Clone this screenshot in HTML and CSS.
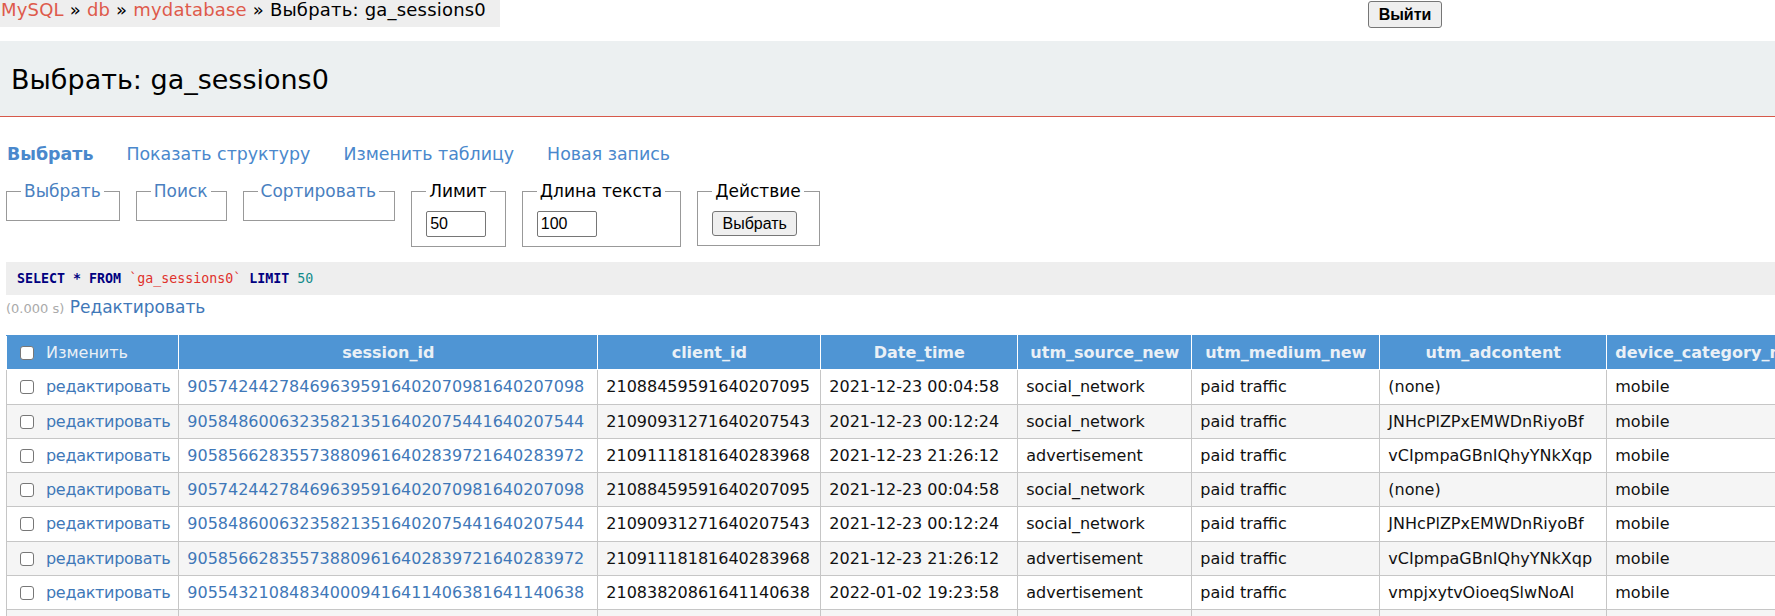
FILE: index.html
```html
<!DOCTYPE html>
<html lang="ru">
<head>
<meta charset="utf-8">
<title>Выбрать: ga_sessions0 - Adminer</title>
<link rel="stylesheet" href="styles.css">
</head>
<body>
<div class="topbar">
  <div class="crumbs"><a href="#">MySQL</a> » <a href="#">db</a> » <a href="#">mydatabase</a> » Выбрать: ga_sessions0</div>
  <button class="logout" type="button">Выйти</button>
</div>
<div class="head"><h1 class="title">Выбрать: ga_sessions0</h1></div>
<div class="main">
  <p class="links">
    <a href="#" class="cur">Выбрать</a>
    <a href="#">Показать структуру</a>
    <a href="#">Изменить таблицу</a>
    <a href="#">Новая запись</a>
  </p>
  <form class="filters">
    <fieldset class="fs"><legend><a href="#">Выбрать</a></legend></fieldset>
    <fieldset class="fs"><legend><a href="#">Поиск</a></legend></fieldset>
    <fieldset class="fs"><legend><a href="#">Сортировать</a></legend></fieldset>
    <fieldset class="fs"><legend>Лимит</legend><input class="num" type="text" value="50"></fieldset>
    <fieldset class="fs"><legend>Длина текста</legend><input class="num" type="text" value="100"></fieldset>
    <fieldset class="fs"><legend>Действие</legend><button class="btn" type="button">Выбрать</button></fieldset>
  </form>
  <pre class="sql"><span class="kw">SELECT</span> <span class="kw">*</span> <span class="kw">FROM</span> <span class="str">`ga_sessions0`</span> <span class="kw">LIMIT</span> <span class="numv">50</span></pre>
  <p class="timing"><span class="time">(0.000 s)</span> <a href="#">Редактировать</a></p>
  <div class="tablewrap">
    <table class="grid">
      <thead>
        <tr>
          <th class="first c-edit"><input class="cb" type="checkbox">Изменить</th>
          <th class="c-session">session_id</th>
          <th class="c-client">client_id</th>
          <th class="c-date">Date_time</th>
          <th class="c-source">utm_source_new</th>
          <th class="c-medium">utm_medium_new</th>
          <th class="c-ad">utm_adcontent</th>
          <th>device_category_new</th>
          <th>device_os_new</th>
        </tr>
      </thead>
      <tbody>
        <tr><td><input class="cb" type="checkbox"><a class="edit" href="#">редактировать</a></td><td><a href="#">905742442784696395916402070981640207098</a></td><td>21088459591640207095</td><td>2021-12-23 00:04:58</td><td>social_network</td><td>paid traffic</td><td>(none)</td><td>mobile</td><td>Android</td></tr>
        <tr><td><input class="cb" type="checkbox"><a class="edit" href="#">редактировать</a></td><td><a href="#">905848600632358213516402075441640207544</a></td><td>21090931271640207543</td><td>2021-12-23 00:12:24</td><td>social_network</td><td>paid traffic</td><td>JNHcPlZPxEMWDnRiyoBf</td><td>mobile</td><td>Android</td></tr>
        <tr><td><input class="cb" type="checkbox"><a class="edit" href="#">редактировать</a></td><td><a href="#">905856628355738809616402839721640283972</a></td><td>21091118181640283968</td><td>2021-12-23 21:26:12</td><td>advertisement</td><td>paid traffic</td><td>vCIpmpaGBnIQhyYNkXqp</td><td>mobile</td><td>iOS</td></tr>
        <tr><td><input class="cb" type="checkbox"><a class="edit" href="#">редактировать</a></td><td><a href="#">905742442784696395916402070981640207098</a></td><td>21088459591640207095</td><td>2021-12-23 00:04:58</td><td>social_network</td><td>paid traffic</td><td>(none)</td><td>mobile</td><td>Android</td></tr>
        <tr><td><input class="cb" type="checkbox"><a class="edit" href="#">редактировать</a></td><td><a href="#">905848600632358213516402075441640207544</a></td><td>21090931271640207543</td><td>2021-12-23 00:12:24</td><td>social_network</td><td>paid traffic</td><td>JNHcPlZPxEMWDnRiyoBf</td><td>mobile</td><td>Android</td></tr>
        <tr><td><input class="cb" type="checkbox"><a class="edit" href="#">редактировать</a></td><td><a href="#">905856628355738809616402839721640283972</a></td><td>21091118181640283968</td><td>2021-12-23 21:26:12</td><td>advertisement</td><td>paid traffic</td><td>vCIpmpaGBnIQhyYNkXqp</td><td>mobile</td><td>iOS</td></tr>
        <tr><td><input class="cb" type="checkbox"><a class="edit" href="#">редактировать</a></td><td><a href="#">905543210848340009416411406381641140638</a></td><td>21083820861641140638</td><td>2022-01-02 19:23:58</td><td>advertisement</td><td>paid traffic</td><td>vmpjxytvOioeqSlwNoAl</td><td>mobile</td><td>Android</td></tr>
        <tr><td><input class="cb" type="checkbox"><a class="edit" href="#">редактировать</a></td><td><a href="#">905543210848340009416411406381641140638</a></td><td>21083820861641140638</td><td>2022-01-02 19:23:58</td><td>advertisement</td><td>paid traffic</td><td>vmpjxytvOioeqSlwNoAl</td><td>mobile</td><td>Android</td></tr>
      </tbody>
    </table>
  </div>
</div>
</body>
</html>
```
FILE: styles.css
```css
html, body {
  overflow: hidden;
}
body {
  margin: 0;
  font-family: "DejaVu Sans", Verdana, sans-serif;
  font-size: 16px;
  color: #000;
  background: #fff;
}
a {
  text-decoration: none;
}
.topbar {
  display: flex;
  align-items: flex-start;
  height: 28px;
}
.crumbs {
  box-sizing: border-box;
  width: 500px;
  height: 27px;
  padding-left: 1px;
  background: #eeeeee;
  font-size: 18px;
  letter-spacing: 0.2px;
  line-height: 20px;
  white-space: nowrap;
  overflow: hidden;
}
.crumbs a {
  color: #de5a4b;
}
.logout {
  margin: 1px 0 0 868px;
  width: 74px;
  height: 27px;
  padding: 0;
  font: bold 16px "Liberation Sans", Arial, sans-serif;
  color: #000;
  background: #efefef;
  border: 1px solid #767676;
  border-radius: 3px;
}
.head {
  box-sizing: border-box;
  margin-top: 13px;
  height: 76px;
  background: #ecf0f1;
  border-bottom: 1px solid #d6594a;
}
.title {
  margin: 0;
  padding: 23px 11px 0;
  font-size: 27px;
  font-weight: normal;
  line-height: 32px;
}
.main {
  padding-left: 6px;
}
.links {
  display: flex;
  gap: 33px;
  margin: 27px 0 0 1px;
  font-size: 17.4px;
  line-height: 21px;
}
.links a {
  color: #4a88cc;
}
.links .cur {
  font-weight: bold;
}
.filters {
  display: flex;
  align-items: flex-start;
  gap: 16px;
  margin: 16px 0 0;
}
.fs {
  margin: 0;
  min-width: 0;
  padding: 10px 15px 9px 14px;
  border: 1px solid #999;
}
.fs legend {
  padding: 0 3px;
  font-size: 17px;
  line-height: 20px;
}
.fs legend a {
  color: #4a7fbf;
}
.num {
  display: block;
  box-sizing: border-box;
  width: 60px;
  height: 26px;
  margin: 0;
  padding: 0 3px;
  font: 16px "Liberation Sans", Arial, sans-serif;
  color: #000;
  border: 1px solid #767676;
  border-radius: 2px;
}
.btn {
  display: block;
  box-sizing: border-box;
  width: 85px;
  height: 25px;
  margin: 0;
  padding: 0;
  font: 16px "Liberation Sans", Arial, sans-serif;
  color: #000;
  background: #efefef;
  border: 1px solid #767676;
  border-radius: 3px;
}
.sql {
  margin: 15px 0 0;
  padding: 0 11px;
  background: #eeeeee;
  font: 13.3px "DejaVu Sans Mono", monospace;
  line-height: 33px;
}
.sql .kw {
  color: #000080;
  font-weight: bold;
}
.sql .str {
  color: #e0312b;
}
.sql .numv {
  color: #138b8b;
}
.timing {
  margin: 2px 0 0;
  font-size: 17px;
  line-height: 21px;
}
.timing a {
  color: #3f78b8;
}
.time {
  color: #aaaaaa;
  font-size: 13px;
}
.tablewrap {
  margin-top: 16px;
  overflow: hidden;
}
.grid {
  width: max-content;
  border-collapse: collapse;
  white-space: nowrap;
  font-size: 16px;
}
.grid th,
.grid td {
  padding: 7px 8px;
  line-height: 19.3px;
  border: 1px solid #c6c6c6;
}
.grid th {
  background: #4f95d4;
  color: #eaf0f6;
  font-weight: bold;
  text-align: center;
  border-color: #ffffff;
  border-top-color: #4f95d4;
}
.grid th.first {
  font-weight: normal;
  text-align: left;
}
.c-edit { width: 154px; }
.c-session { width: 402px; }
.c-client { width: 206px; }
.c-date { width: 180px; }
.c-source { width: 157px; }
.c-medium { width: 171px; }
.c-ad { width: 210px; }
.grid td {
  text-align: left;
  color: #111;
}
.grid tbody tr:nth-child(even) td {
  background: #f5f5f5;
}
.grid a {
  color: #3f78b8;
}
.grid a.edit {
  letter-spacing: -0.3px;
}
.cb {
  appearance: none;
  -webkit-appearance: none;
  box-sizing: border-box;
  width: 14px;
  height: 14px;
  margin: 0 12px 0 5px;
  vertical-align: -2px;
  background: #fff;
  border: 1px solid #777;
  border-radius: 3px;
}
```
